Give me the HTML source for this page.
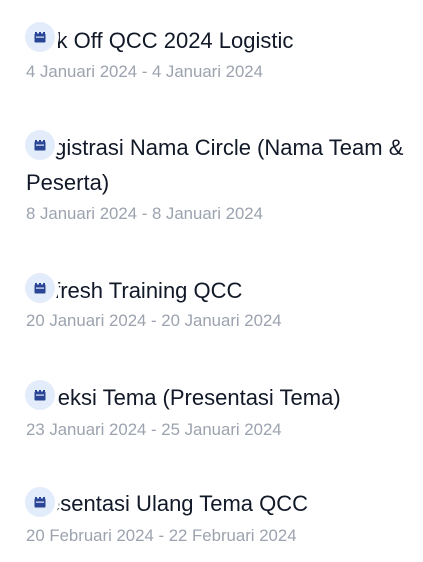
<!DOCTYPE html>
<html><head><meta charset="utf-8"><style>
body{margin:0;width:423px;height:562px;background:#fff;overflow:hidden;position:relative;font-family:"Liberation Sans",sans-serif}
.t{position:absolute;left:26px;font-size:22px;line-height:35px;color:#111827;width:392px}
.d{position:absolute;left:26px;font-size:16.8px;line-height:22px;color:#9ca3af;white-space:nowrap}
.c{position:absolute;left:25px;width:30px;height:30px;border-radius:50%;background:#e3ecfb;z-index:2;box-shadow:0 0 0 4px #fff}
.c svg{position:absolute;left:9px;top:9px}
</style></head><body>
<div class="c" style="top:22px"><svg width="12" height="12" viewBox="0 0 12 12"><rect x="1" y="1" width="2" height="2" fill="#2a4596"/><rect x="5" y="1" width="2" height="2" fill="#2a4596"/><rect x="9" y="1" width="2" height="2" fill="#2a4596"/><rect x="0.5" y="2.5" width="11" height="9" rx="1" fill="#2a4596"/><rect x="2" y="5.5" width="8" height="1.2" fill="#e3ecfb"/></svg></div>
<div class="t" style="top:23px">Kick Off QCC 2024 Logistic</div>
<div class="d" style="top:61px">4 Januari 2024 - 4 Januari 2024</div>

<div class="c" style="top:130px"><svg width="12" height="12" viewBox="0 0 12 12"><rect x="1" y="1" width="2" height="2" fill="#2a4596"/><rect x="5" y="1" width="2" height="2" fill="#2a4596"/><rect x="9" y="1" width="2" height="2" fill="#2a4596"/><rect x="0.5" y="2.5" width="11" height="9" rx="1" fill="#2a4596"/><rect x="2" y="5.5" width="8" height="1.2" fill="#e3ecfb"/></svg></div>
<div class="t" style="top:130px">Registrasi Nama Circle (Nama Team &amp; Peserta)</div>
<div class="d" style="top:203px">8 Januari 2024 - 8 Januari 2024</div>

<div class="c" style="top:273px"><svg width="12" height="12" viewBox="0 0 12 12"><rect x="1" y="1" width="2" height="2" fill="#2a4596"/><rect x="5" y="1" width="2" height="2" fill="#2a4596"/><rect x="9" y="1" width="2" height="2" fill="#2a4596"/><rect x="0.5" y="2.5" width="11" height="9" rx="1" fill="#2a4596"/><rect x="2" y="5.5" width="8" height="1.2" fill="#e3ecfb"/></svg></div>
<div class="t" style="top:273px">Refresh Training QCC</div>
<div class="d" style="top:310px">20 Januari 2024 - 20 Januari 2024</div>

<div class="c" style="top:380px"><svg width="12" height="12" viewBox="0 0 12 12"><rect x="1" y="1" width="2" height="2" fill="#2a4596"/><rect x="5" y="1" width="2" height="2" fill="#2a4596"/><rect x="9" y="1" width="2" height="2" fill="#2a4596"/><rect x="0.5" y="2.5" width="11" height="9" rx="1" fill="#2a4596"/><rect x="2" y="5.5" width="8" height="1.2" fill="#e3ecfb"/></svg></div>
<div class="t" style="top:380px">Seleksi Tema (Presentasi Tema)</div>
<div class="d" style="top:419px">23 Januari 2024 - 25 Januari 2024</div>

<div class="c" style="top:487px"><svg width="12" height="12" viewBox="0 0 12 12"><rect x="1" y="1" width="2" height="2" fill="#2a4596"/><rect x="5" y="1" width="2" height="2" fill="#2a4596"/><rect x="9" y="1" width="2" height="2" fill="#2a4596"/><rect x="0.5" y="2.5" width="11" height="9" rx="1" fill="#2a4596"/><rect x="2" y="5.5" width="8" height="1.2" fill="#e3ecfb"/></svg></div>
<div class="t" style="top:486px">Presentasi Ulang Tema QCC</div>
<div class="d" style="top:525px">20 Februari 2024 - 22 Februari 2024</div>
</body></html>
